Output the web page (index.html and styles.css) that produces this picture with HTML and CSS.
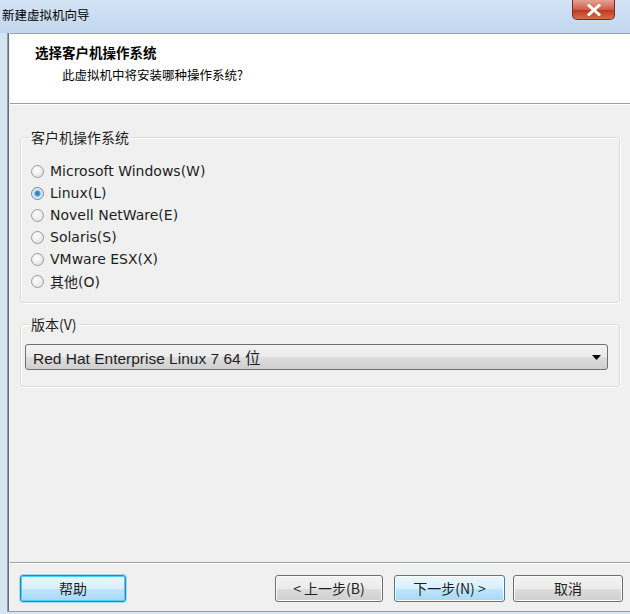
FILE: index.html
```html
<!DOCTYPE html>
<html lang="zh-CN">
<head>
  <meta charset="UTF-8">
  <title>新建虚拟机向导</title>
  <link rel="stylesheet" href="styles.css">
</head>
<body>
  <div class="window">
    <div class="titlebar">
      <span class="title">新建虚拟机向导</span>
      <button class="close" type="button">
        <svg width="14" height="12" viewBox="0 0 14 12"><path d="M2 1.5 L12 10.5 M12 1.5 L2 10.5" stroke="#fff" stroke-width="3" stroke-linecap="square"/></svg>
      </button>
    </div>

    <div class="frame">
      <div class="header">
        <div class="header-title">选择客户机操作系统</div>
        <div class="header-sub">此虚拟机中将安装哪种操作系统?</div>
      </div>

      <div class="content">
        <fieldset class="group">
          <legend>客户机操作系统</legend>
          <div class="radios">
            <label class="radio"><span class="dot"></span>Microsoft Windows(W)</label>
            <label class="radio checked"><span class="dot"></span>Linux(L)</label>
            <label class="radio"><span class="dot"></span>Novell NetWare(E)</label>
            <label class="radio"><span class="dot"></span>Solaris(S)</label>
            <label class="radio"><span class="dot"></span>VMware ESX(X)</label>
            <label class="radio"><span class="dot"></span>其他(O)</label>
          </div>
        </fieldset>

        <fieldset class="group version">
          <legend>版本(V)</legend>
          <div class="select">
            <span>Red Hat Enterprise Linux 7 64 位</span>
            <svg width="9" height="5" viewBox="0 0 9 5"><path d="M0 0 H9 L4.5 5 Z" fill="#000"/></svg>
          </div>
        </fieldset>
      </div>

      <div class="footer">
        <button class="btn focus" type="button">帮助</button>
        <div class="nav">
          <button class="btn prev" type="button">&lt; 上一步(B)</button>
          <button class="btn default" type="button">下一步(N) &gt;</button>
          <button class="btn cancel" type="button">取消</button>
        </div>
      </div>
    </div>
  </div>
</body>
</html>
```

FILE: styles.css
```css
body { margin: 0; background: #fff; font-family: "DejaVu Sans", "Noto Sans CJK SC", sans-serif; font-size: 13px; color: #000; }

.window { width: 630px; height: 614px; display: flex; flex-direction: column; overflow: hidden; background: #d7e4f3; }

/* title bar */
.titlebar { height: 33px; flex-shrink: 0; display: flex; justify-content: space-between; align-items: flex-start; background: linear-gradient(to bottom, #d3e3f5, #c2d7ee); }
.title { font-family: "Noto Sans CJK SC", sans-serif; font-size: 12.5px; margin: 5px 0 0 2px; color: #000; }
.close { width: 43px; height: 20px; margin-right: 15px; padding: 0; border: 1px solid #7b2c21; border-top: none; border-radius: 0 0 5px 5px; background: linear-gradient(to bottom, #e4a294, #cf5e49 50%, #c0391f 55%, #d86e4d); display: flex; align-items: center; justify-content: center; }

/* client area with the window's left edge */
.frame { flex: 1; display: flex; flex-direction: column; margin-left: 7px; border-left: 1px solid #8e9bab; border-bottom: 1px solid #8e9bab; margin-bottom: 2px; box-shadow: inset 1px 0 0 #5f7186; background: #f0f0f0; padding-left: 2px; }

.header { height: 69px; flex-shrink: 0; background: #fff; border-top: 1px solid #a0a0a0; border-bottom: 1px solid #a0a0a0; box-shadow: 0 1px 0 #fff; }
.header-title { font-family: "Noto Sans CJK SC", sans-serif; font-weight: bold; font-size: 13.5px; margin: 8px 0 0 25px; }
.header-sub { font-family: "Noto Sans CJK SC", sans-serif; font-size: 12.5px; margin: 3px 0 0 52px; }

.content { flex: 1; padding: 23px 10px 0 10px; }

.group { margin: 0; padding: 0 6px; border: 1px solid #dcdcdc; border-radius: 3px; box-shadow: inset 1px 1px 0 #fff, 1px 1px 0 #fff; }
.group legend { padding: 0 2px 0 2px; margin-left: 2px; font-family: "Noto Sans CJK SC", sans-serif; font-size: 14px; color: #1e1e1e; }

.radios { display: flex; flex-direction: column; padding: 13px 0 10px 4px; }
.radio { height: 22px; display: flex; align-items: center; gap: 6px; font-size: 14px; color: #1e1e1e; }
.dot { width: 11px; height: 11px; border-radius: 50%; border: 1px solid #9a9a9a; background: radial-gradient(circle at 40% 35%, #fff, #dcdcdc); }
.radio.checked .dot { background: radial-gradient(circle, #2f6fa8 0, #4a9ad4 2.5px, #cfe6f7 3.5px, #e9e9e9 6px); border-color: #6f88a0; }

.version { margin-top: 11px; padding-bottom: 16px; }
.select { height: 24px; margin: 10px 5px 0 -2px; display: flex; align-items: center; justify-content: space-between; padding: 0 6px 0 7px; border: 1px solid #707070; border-radius: 3px; background: linear-gradient(to bottom, #f2f2f2 0, #ebebeb 50%, #dddddd 51%, #cfcfcf 100%); font-family: "Liberation Sans", "Noto Sans CJK SC", sans-serif; font-size: 15.5px; color: #1e1e1e; }

/* button row under the separator */
.footer { height: 49px; flex-shrink: 0; display: flex; align-items: center; justify-content: space-between; padding: 2px 7px 0 10px; box-sizing: border-box; border-top: 1px solid #a0a0a0; box-shadow: inset 0 1px 0 #fff; }
.nav { display: flex; }
.btn { width: 108px; height: 27px; padding: 0; border: 1px solid #707070; border-radius: 3px; background: linear-gradient(to bottom, #f2f2f2 0, #ebebeb 50%, #dddddd 51%, #cfcfcf 100%); box-shadow: inset 0 0 0 1px #fcfcfc; font-family: "Noto Sans CJK SC", sans-serif; font-size: 14px; color: #1e1e1e; }
.btn.focus { width: 106px; border-color: #3c7fb1; box-shadow: inset 0 0 0 1px #48d0f7, 0 0 0 1px #a5d8ef; background: linear-gradient(to bottom, #eaf6fd 0, #d9f0fc 50%, #bee6fd 51%, #a7d9f5 100%); }
.btn.default { width: 111px; margin: 0 8px 0 11px; border-color: #3c7fb1; background: linear-gradient(to bottom, #eaf6fd 0, #d9f0fc 50%, #bee6fd 51%, #a7d9f5 100%); }
.btn.cancel { width: 110px; }
```
